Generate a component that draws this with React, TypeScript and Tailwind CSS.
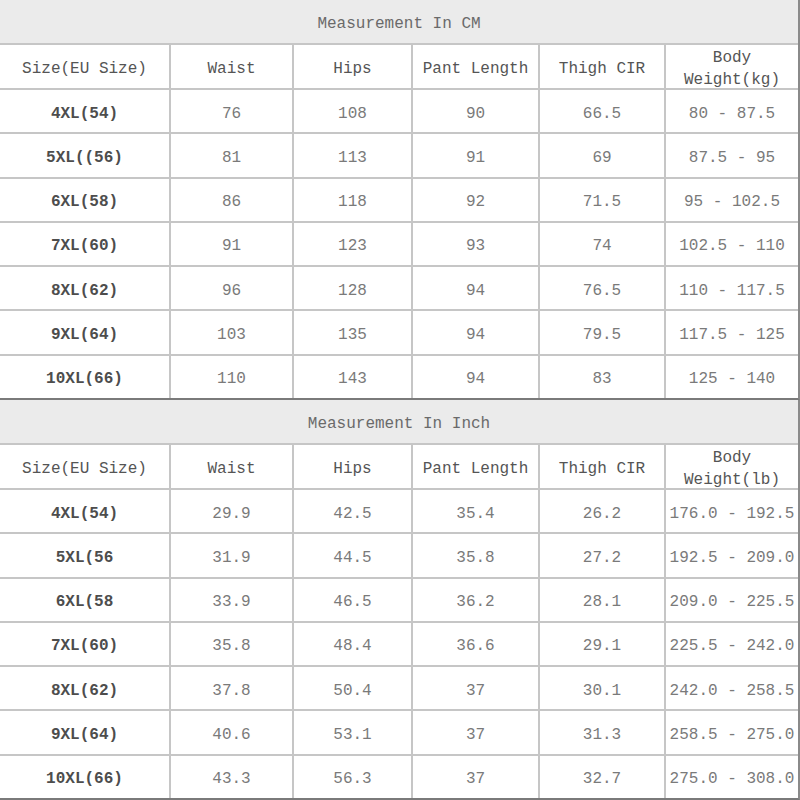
import React from "react";

type Table = {
  title: string;
  weightUnit: string;
  rows: string[][];
};

const tables: Table[] = [
  {
    title: "Measurement In CM",
    weightUnit: "Weight(kg)",
    rows: [
      ["4XL(54)", "76", "108", "90", "66.5", "80 - 87.5"],
      ["5XL((56)", "81", "113", "91", "69", "87.5 - 95"],
      ["6XL(58)", "86", "118", "92", "71.5", "95 - 102.5"],
      ["7XL(60)", "91", "123", "93", "74", "102.5 - 110"],
      ["8XL(62)", "96", "128", "94", "76.5", "110 - 117.5"],
      ["9XL(64)", "103", "135", "94", "79.5", "117.5 - 125"],
      ["10XL(66)", "110", "143", "94", "83", "125 - 140"],
    ],
  },
  {
    title: "Measurement In Inch",
    weightUnit: "Weight(lb)",
    rows: [
      ["4XL(54)", "29.9", "42.5", "35.4", "26.2", "176.0 - 192.5"],
      ["5XL(56", "31.9", "44.5", "35.8", "27.2", "192.5 - 209.0"],
      ["6XL(58", "33.9", "46.5", "36.2", "28.1", "209.0 - 225.5"],
      ["7XL(60)", "35.8", "48.4", "36.6", "29.1", "225.5 - 242.0"],
      ["8XL(62)", "37.8", "50.4", "37", "30.1", "242.0 - 258.5"],
      ["9XL(64)", "40.6", "53.1", "37", "31.3", "258.5 - 275.0"],
      ["10XL(66)", "43.3", "56.3", "37", "32.7", "275.0 - 308.0"],
    ],
  },
];

const headers = ["Size(EU Size)", "Waist", "Hips", "Pant Length", "Thigh CIR"];

function SizeTable({ t }: { t: Table }) {
  return (
    <div className="grid h-[400px] grid-cols-[169px_121px_117px_125px_124px_132px] grid-rows-[43px_43px_repeat(7,1fr)] gap-[2px] border-b-2 border-r-2 border-b-[#7a7a7a] border-r-[#8a8a8a] bg-[#c6c6c6]">
      <div className="col-span-6 flex items-center justify-center bg-[#ebebeb] pt-[5px] text-[#6a6a6a]">
        {t.title}
      </div>
      {headers.map((h) => (
        <div key={h} className="flex items-center justify-center bg-white pt-[5px] text-[#555]">
          {h}
        </div>
      ))}
      <div className="flex flex-col items-center justify-center bg-white pt-[5px] leading-[22px] text-[#555]">
        <span>Body</span>
        <span>{t.weightUnit}</span>
      </div>
      {t.rows.map((r, i) =>
        r.map((c, j) => (
          <div
            key={`${i}-${j}`}
            className={
              j === 0
                ? "flex items-center justify-center bg-white pt-[5px] font-bold text-[#4d4d4d]"
                : "flex items-center justify-center whitespace-nowrap bg-white pt-[5px] text-[#7a7a7a]"
            }
          >
            {c}
          </div>
        ))
      )}
    </div>
  );
}

export default function App() {
  return (
    <div
      className="h-[800px] w-[800px] overflow-hidden bg-white text-[16px]"
      style={{ fontFamily: '"Liberation Mono", "DejaVu Sans Mono", monospace' }}
    >
      {tables.map((t) => (
        <SizeTable key={t.title} t={t} />
      ))}
    </div>
  );
}
